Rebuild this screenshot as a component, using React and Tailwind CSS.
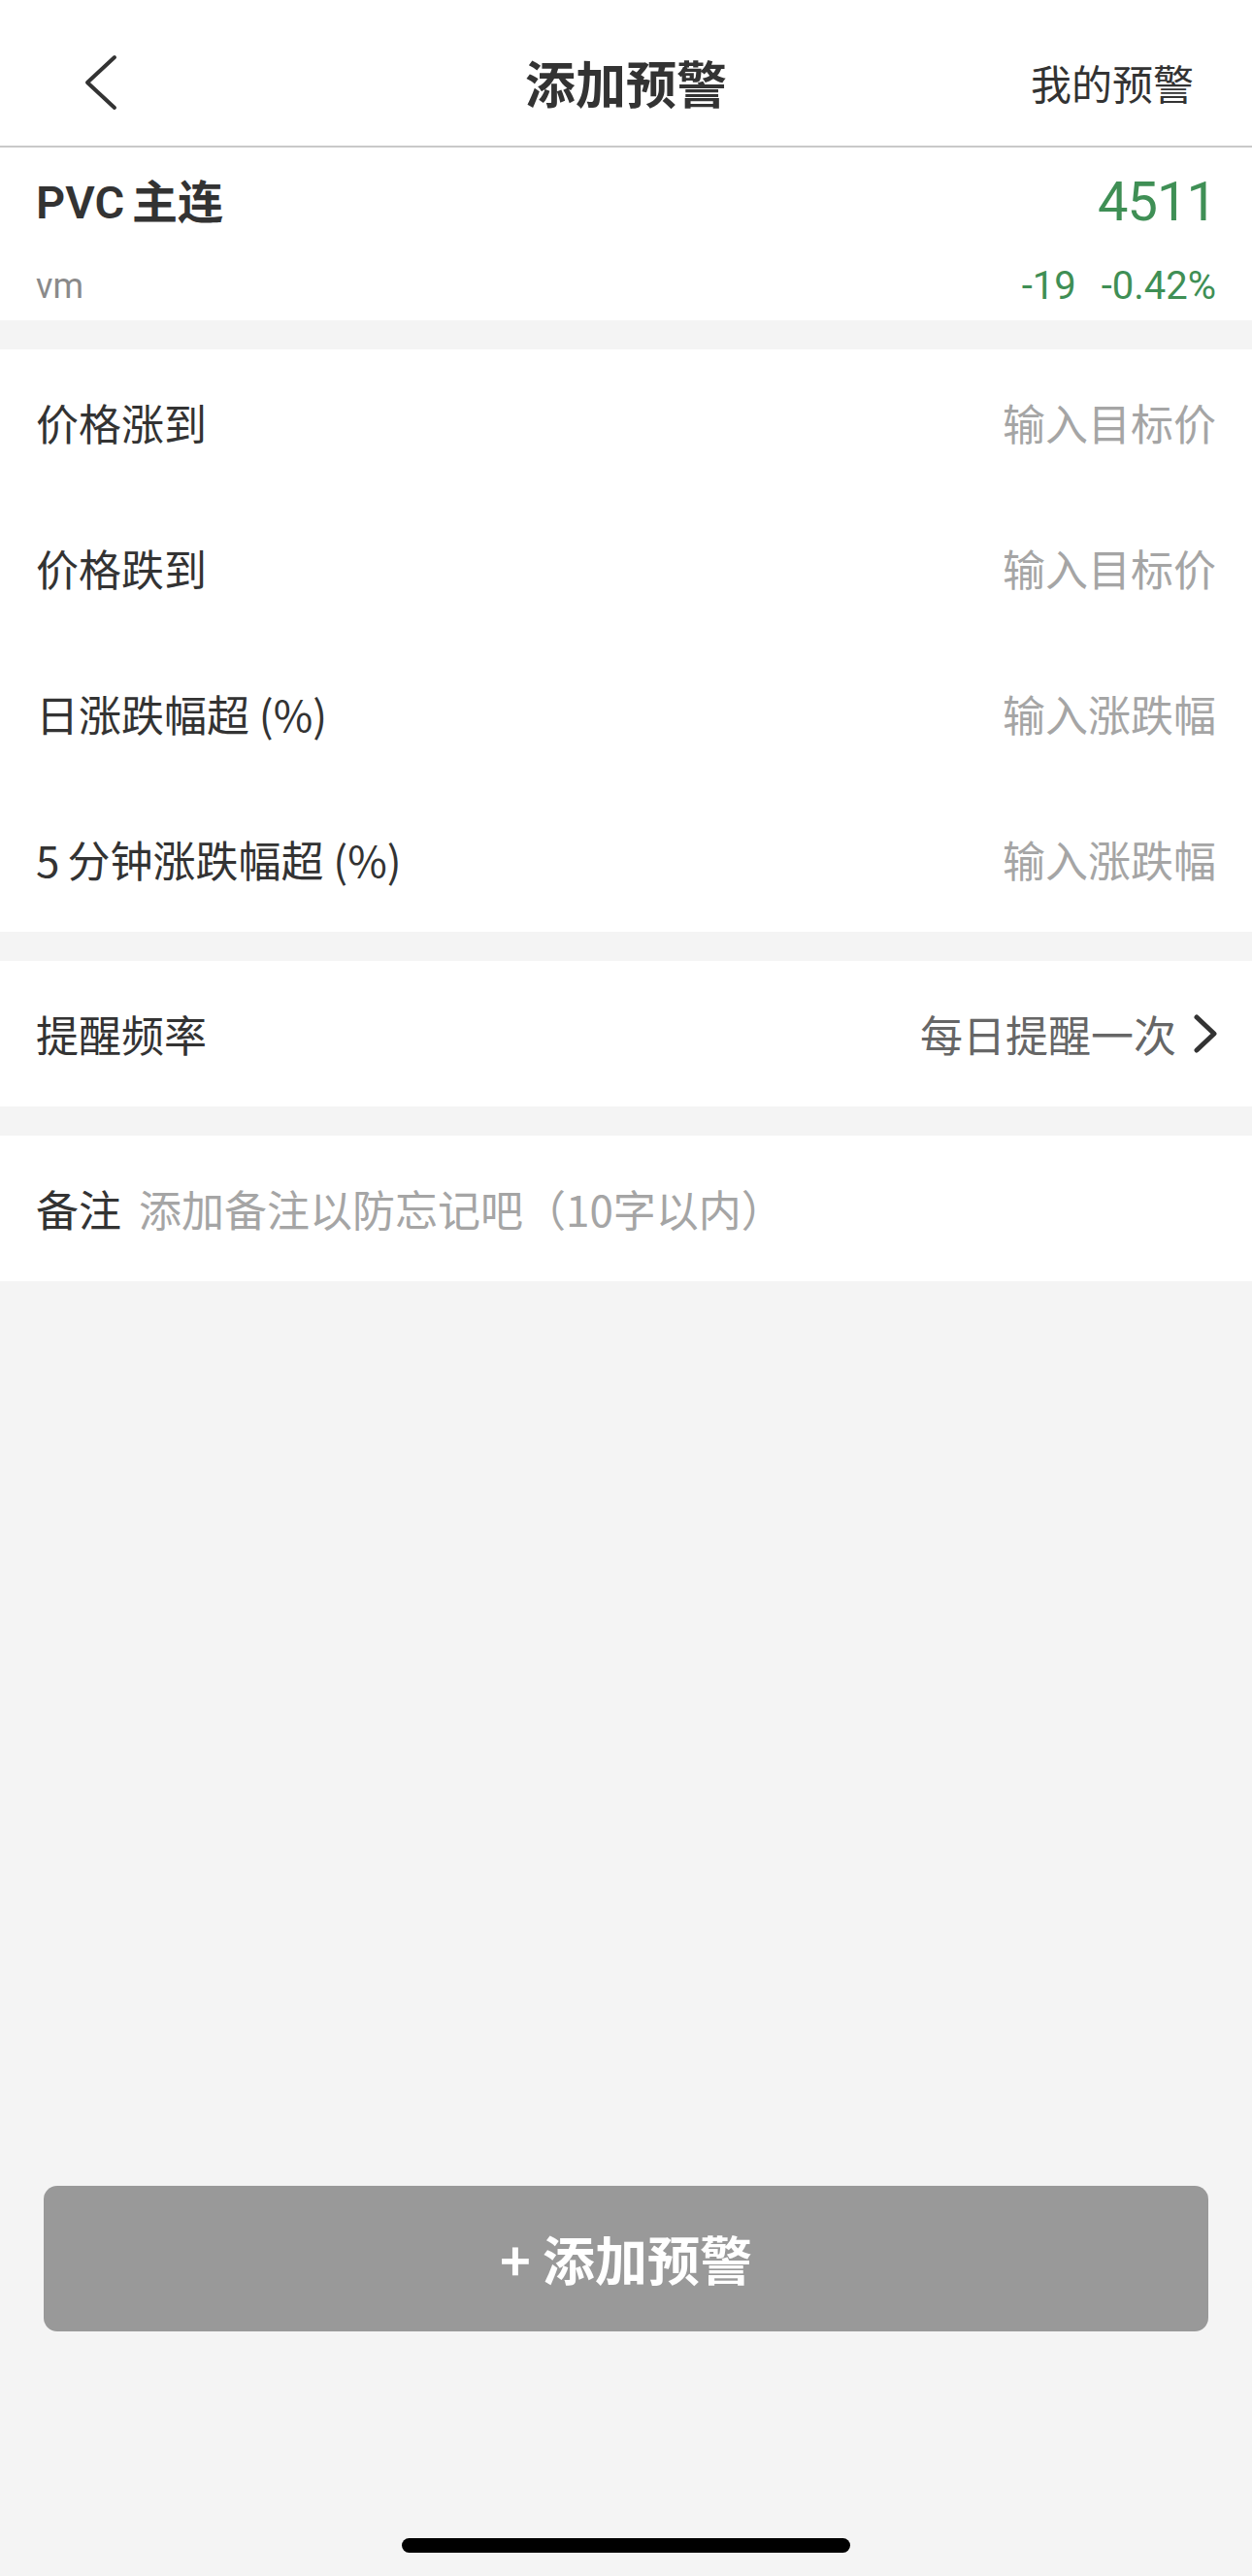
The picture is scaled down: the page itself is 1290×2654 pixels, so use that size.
const cjk = "font-['Noto_Sans_CJK_SC',sans-serif]"
const num = "font-['Roboto','Noto_Sans_CJK_SC',sans-serif]"

function Chevron({ dir = "left", className = "" }) {
  const d = dir === "left" ? "M32 3 L4 29 L32 55" : "M3 3 L21 20 L3 37"
  const box = dir === "left" ? "0 0 36 58" : "0 0 24 40"
  return (
    <svg viewBox={box} className={className} fill="none" stroke="#333" strokeWidth={dir === "left" ? 4 : 5} strokeLinecap="round" strokeLinejoin="round">
      <path d={d} />
    </svg>
  )
}

function InputRow({ label, placeholder }) {
  return (
    <div className="flex h-[150px] items-center justify-between px-[37px]">
      <span className="text-[44px] leading-none text-[#333]">{label}</span>
      <span className="text-[44px] leading-none text-[#a5a5a5]">{placeholder}</span>
    </div>
  )
}

export default function App() {
  const rows = [
    ["价格涨到", "输入目标价"],
    ["价格跌到", "输入目标价"],
    ["日涨跌幅超 (%)", "输入涨跌幅"],
    [<>5<span className="ml-[8px]">分钟涨跌幅超 (%)</span></>, "输入涨跌幅"],
  ]

  return (
    <div className={`flex h-[2654px] w-full flex-col bg-[#f4f4f4] ${cjk}`}>
      {/* nav bar */}
      <div className="flex h-[152px] items-center border-b-2 border-[#c9c9c9] bg-white pt-[20px]">
        <div className="w-[320px] pl-[86px]">
          <Chevron dir="left" className="h-[58px] w-[36px]" />
        </div>
        <div className="flex-1 text-center text-[52px] font-semibold leading-none text-[#333]">添加预警</div>
        <div className="w-[320px] pr-[60px] text-right text-[42px] leading-none text-[#333]">我的预警</div>
      </div>

      {/* quote */}
      <div className="flex h-[178px] flex-col bg-white px-[37px]">
        <div className="mt-[28px] flex h-[56px] items-center justify-between">
          <span className={`${num} text-[47px] font-semibold leading-none text-[#333]`}>
            PVC<span className="ml-[8px]">主连</span>
          </span>
          <span className={`${num} text-[56px] leading-none tracking-[-1px] text-[#3f8f55]`}>4511</span>
        </div>
        <div className="mt-[39px] flex h-[40px] items-center justify-between">
          <span className={`${num} text-[36px] leading-none text-[#8a8a8a]`}>vm</span>
          <span className={`${num} flex gap-[26px] text-[40px] leading-none text-[#3f8f55]`}>
            <span>-19</span>
            <span>-0.42%</span>
          </span>
        </div>
      </div>

      <div className="mt-[30px] bg-white">
        {rows.map(([l, p], i) => (
          <InputRow key={i} label={l} placeholder={p} />
        ))}
      </div>

      <div className="mt-[30px] flex h-[150px] items-center justify-between bg-white pl-[37px] pr-[36px]">
        <span className="text-[44px] leading-none text-[#333]">提醒频率</span>
        <div className="flex items-center gap-[18px]">
          <span className="text-[44px] leading-none text-[#666]">每日提醒一次</span>
          <Chevron dir="right" className="h-[40px] w-[24px]" />
        </div>
      </div>

      <div className="mt-[30px] flex h-[150px] items-center gap-[18px] bg-white px-[37px]">
        <span className="text-[44px] leading-none text-[#333]">备注</span>
        <span className="text-[44px] leading-none text-[#a5a5a5]">添加备注以防忘记吧（10字以内）</span>
      </div>

      <div className="flex-1" />

      <div className="mx-[45px] flex h-[150px] items-center justify-center rounded-[14px] bg-[#999999]">
        <span className="text-[54px] font-semibold leading-none text-white">+ 添加预警</span>
      </div>

      <div className="mb-[24px] mt-[213px] flex justify-center">
        <div className="h-[15px] w-[462px] rounded-full bg-black" />
      </div>
    </div>
  )
}
